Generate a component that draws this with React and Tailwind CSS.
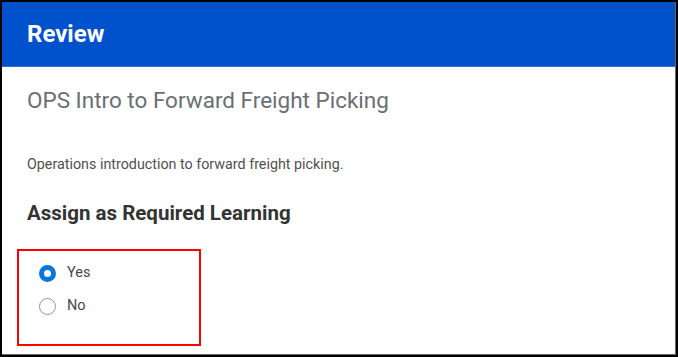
export default function App() {
  return (
    <div className="w-[678px] h-[357px] border-2 border-black bg-white" style={{ fontFamily: "Roboto, 'Liberation Sans', sans-serif" }}>
      <div className="h-full border-r border-b border-[#666] flex flex-col">
        <div className="h-[65px] bg-[#0052cc] border-b border-[#2f6fd6] flex items-center pl-[25px]">
          <h1 className="text-[24px] font-bold text-white leading-none">Review</h1>
        </div>
        <div className="pl-[25px] pt-[20px]">
          <h2 className="text-[22.5px] leading-[26px] text-[#6b6e73]">OPS Intro to Forward Freight Picking</h2>
          <p className="mt-[42px] text-[14.3px] leading-[18px] text-[#505050]">Operations introduction to forward freight picking.</p>
          <h3 className="mt-[28px] text-[20.5px] leading-[24px] font-bold text-[#333]">Assign as Required Learning</h3>
        </div>
        <div className="ml-[15px] mt-[24px] w-[184px] h-[97px] border-2 border-[#ff0000] pl-[20px] pt-[12px] flex flex-col gap-[13px]">
          <label className="flex items-center gap-[11px]">
            <span className="w-[17px] h-[17px] rounded-full border-[5px] border-[#0875e1] bg-white"></span>
            <span className="text-[14.5px] leading-[20px] text-[#494949]">Yes</span>
          </label>
          <label className="flex items-center gap-[11px]">
            <span className="w-[17px] h-[17px] rounded-full border border-[#8f959c] bg-white"></span>
            <span className="text-[14.5px] leading-[20px] text-[#494949]">No</span>
          </label>
        </div>
      </div>
    </div>
  );
}
